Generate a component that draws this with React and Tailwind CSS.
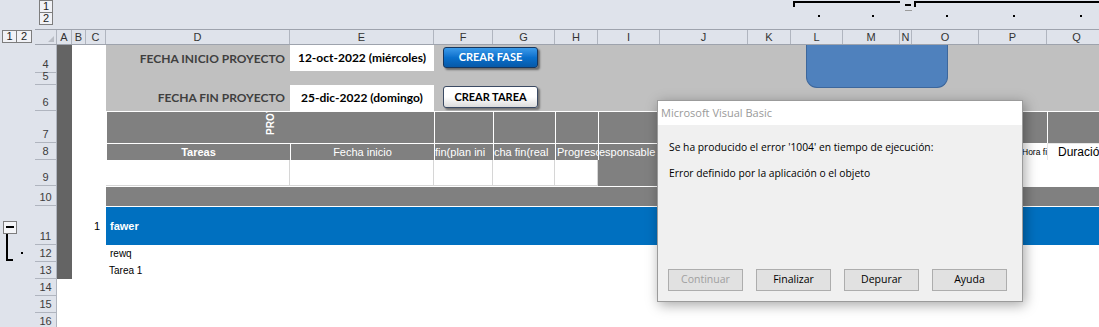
import React from 'react';

// column widths (Excel columns A..Q)
const W = {
  A: 'w-[15px]', B: 'w-[14px]', C: 'w-[20px]', D: 'w-[184px]', E: 'w-[144px]', F: 'w-[59px]', G: 'w-[62px]',
  H: 'w-[43px]', I: 'w-[62px]', J: 'w-[88px]', K: 'w-[43px]', L: 'w-[52px]', M: 'w-[57px]', N: 'w-[12px]',
  O: 'w-[67px]', P: 'w-[68px]', Q: 'w-[60px]',
};
const COLS = ['A', 'B', 'C', 'D', 'E', 'F', 'G', 'H', 'I', 'J', 'K', 'L', 'M', 'N', 'O', 'P', 'Q'];

const LevelBtn = ({ children, className = '' }) => (
  <div className={`flex h-[13px] w-[14px] shrink-0 items-center justify-center border border-[#7d7d7d] bg-[#f1f2f6] text-[11px] leading-none text-[#222] ${className}`}>
    {children}
  </div>
);

const Row = ({ n, h, outline, children }) => (
  <div className={`flex shrink-0 ${h}`}>
    <div className="relative w-[35px] shrink-0 bg-[#dfe3eb]">{outline}</div>
    <div className="flex w-[22px] shrink-0 items-end justify-center border-r border-b border-[#b0b5bf] bg-[#dfe3eb] pb-[1px] text-[11px] leading-[13px] text-[#3c3c3c]">
      {n}
    </div>
    <div className="flex min-w-0 flex-1">{children}</div>
  </div>
);

const Dark = () => <div className={`${W.A} shrink-0 bg-[#646464]`} />;
const WhiteBC = ({ children }) => <div className="w-[34px] shrink-0 bg-white">{children}</div>;

const hdr = 'flex shrink-0 items-center overflow-hidden whitespace-nowrap border-t border-l border-white bg-[#808080] text-[11px] text-white';

const DlgBtn = ({ children, disabled }) => (
  <div className={`flex h-[22px] w-[75px] shrink-0 items-center justify-center border border-[#adadad] bg-[#e1e1e1] text-[10.5px] ${disabled ? 'text-[#a0a0a0]' : 'text-black'}`}>
    {children}
  </div>
);

export default function App() {
  return (
    <div className="relative h-[327px] w-[1099px] overflow-hidden bg-white font-['Liberation_Sans',Arial,sans-serif]">
      {/* outline bar for columns */}
      <div className="flex h-[29px] bg-[#dfe3eb]">
        <div className="w-[35px] shrink-0" />
        <div className="flex w-[22px] shrink-0 flex-col pl-[4px]">
          <LevelBtn>1</LevelBtn>
          <LevelBtn className="-mt-px">2</LevelBtn>
        </div>
        <div className="w-[736px] shrink-0" />
        <svg width="306" height="29" className="shrink-0">
          <rect x="0" y="1" width="107" height="2" fill="#000" />
          <rect x="0" y="1" width="2" height="6" fill="#000" />
          <rect x="112" y="4" width="6" height="2" fill="#000" />
          <rect x="112" y="10" width="7" height="1" fill="#9a9a9a" />
          <rect x="121" y="1" width="185" height="2" fill="#000" />
          <rect x="121" y="1" width="2" height="6" fill="#000" />
          {[25, 79, 153, 220, 287].map((x) => (
            <rect key={x} x={x} y="15" width="2" height="2" fill="#000" />
          ))}
        </svg>
      </div>

      {/* column headers */}
      <div className="flex h-[16px] bg-[#dfe3eb]">
        <div className="flex w-[35px] shrink-0 pl-[2px] pt-[1px]">
          <LevelBtn className="w-[15px]">1</LevelBtn>
          <LevelBtn className="-ml-px w-[16px]">2</LevelBtn>
        </div>
        <div className="flex flex-1 border-t border-b border-[#9ea3ad]">
          <div className="flex w-[22px] shrink-0 items-end justify-end border-r border-[#b0b5bf] pr-[2px] pb-[2px]">
            <svg width="6" height="6"><polygon points="6,0 6,6 0,6" fill="#b9bdc5" /></svg>
          </div>
          {COLS.map((c) => (
            <div key={c} className={`${W[c]} flex shrink-0 items-center justify-center border-r border-[#b0b5bf] text-[11px] text-[#333]`}>
              {c}
            </div>
          ))}
        </div>
      </div>

      {/* sheet */}
      <Row n="4" h="h-[28px]">
        <Dark />
        <WhiteBC />
        <div className={`${W.D} flex shrink-0 items-center justify-end bg-[#c0c0c0] pr-[5px] font-['Lato',sans-serif] text-[12px] font-bold text-[#3f3f3f]`}>
          FECHA INICIO PROYECTO
        </div>
        <div className={`${W.E} shrink-0 bg-[#c0c0c0] pb-[2px]`}>
          <div className="flex h-full items-center justify-center bg-white font-['Lato',sans-serif] text-[12px] font-bold text-black">
            12-oct-2022 (miércoles)
          </div>
        </div>
        <div className="w-[121px] shrink-0 bg-[#c0c0c0] pt-[2px] pl-[9px]">
          <div className="flex h-[21px] w-[95px] items-center justify-center rounded-[3px] border border-[#17365d] bg-gradient-to-b from-[#3a9bea] via-[#0a70cc] to-[#0759a8] font-['Lato',sans-serif] text-[11px] font-bold text-white shadow-[2px_2px_2px_rgba(0,0,0,0.45)]">
            CREAR FASE
          </div>
        </div>
        <div className="flex-1 bg-[#c0c0c0]" />
      </Row>

      <Row n="5" h="h-[12px]">
        <Dark />
        <WhiteBC />
        <div className="flex-1 bg-[#c0c0c0]" />
      </Row>

      <Row n="6" h="h-[26px]">
        <Dark />
        <WhiteBC />
        <div className={`${W.D} flex shrink-0 items-center justify-end bg-[#c0c0c0] pr-[5px] font-['Lato',sans-serif] text-[12px] font-bold text-[#3f3f3f]`}>
          FECHA FIN PROYECTO
        </div>
        <div className={`${W.E} flex shrink-0 items-center justify-center bg-white font-['Lato',sans-serif] text-[12px] font-bold text-black`}>
          25-dic-2022 (domingo)
        </div>
        <div className="w-[121px] shrink-0 bg-[#c0c0c0] pt-[1px] pl-[9px]">
          <div className="flex h-[22px] w-[95px] items-center justify-center rounded-[3px] border border-[#3b4a63] bg-gradient-to-b from-white via-white to-[#dcdcdc] font-['Lato',sans-serif] text-[11px] font-bold text-black shadow-[2px_2px_2px_rgba(0,0,0,0.4)]">
            CREAR TAREA
          </div>
        </div>
        <div className="flex-1 bg-[#c0c0c0]" />
      </Row>

      <Row n="7" h="h-[32px]">
        <Dark />
        <WhiteBC />
        <div className={`${hdr} w-[328px] items-end justify-center pb-[8px]`}>
          <span className="rotate-180 text-[10px] font-bold leading-[10px] [writing-mode:vertical-rl]">PROYECTO</span>
        </div>
        <div className={`${hdr} ${W.F}`} />
        <div className={`${hdr} ${W.G}`} />
        <div className={`${hdr} ${W.H}`} />
        <div className={`${hdr} ${W.I}`} />
        <div className={`${hdr} ${W.J}`} />
        <div className={`${hdr} ${W.K}`} />
        <div className={`${hdr} w-[109px]`} />
        <div className={`${hdr} w-[79px]`} />
        <div className={`${hdr} ${W.P}`} />
        <div className={`${hdr} flex-1`} />
      </Row>

      <Row n="8" h="h-[17px]">
        <Dark />
        <WhiteBC />
        <div className={`${hdr} ${W.D} justify-center font-bold`}>Tareas</div>
        <div className={`${hdr} ${W.E} justify-center`}>Fecha inicio</div>
        <div className={`${hdr} ${W.F}`}>fin(plan ini</div>
        <div className={`${hdr} ${W.G}`}>cha fin(real</div>
        <div className={`${hdr} ${W.H} pl-[1px]`}>Progreso</div>
        <div className={`${hdr} ${W.I}`}>esponsable</div>
        <div className={`${hdr} w-[319px]`} />
        <div className={`${W.P} flex shrink-0 items-center overflow-hidden whitespace-nowrap border-t border-white bg-white pl-[43px] text-[8.5px] text-black`}>
          Hora fin
        </div>
        <div className="flex flex-1 items-center overflow-hidden whitespace-nowrap border-t border-l border-[#e6e6e6] bg-white pl-[10px] text-[12px] text-black">
          Duración
        </div>
      </Row>

      <Row n="9" h="h-[26px]">
        <Dark />
        <WhiteBC />
        <div className={`${W.D} shrink-0 border-r border-b border-[#d6d6d6] bg-white`} />
        <div className={`${W.E} shrink-0 border-r border-b border-[#d6d6d6] bg-white`} />
        <div className={`${W.F} shrink-0 border-r border-b border-[#d6d6d6] bg-white`} />
        <div className={`${W.G} shrink-0 border-r border-b border-[#d6d6d6] bg-white`} />
        <div className={`${W.H} shrink-0 border-r border-b border-[#d6d6d6] bg-white`} />
        <div className="w-[381px] shrink-0 bg-[#808080]" />
        <div className="flex-1 bg-white" />
      </Row>

      <Row n="10" h="h-[20px]">
        <Dark />
        <WhiteBC />
        <div className="flex-1 border-t border-white bg-[#808080]" />
      </Row>

      <Row
        n="11"
        h="h-[39px]"
        outline={
          <svg width="35" height="56" className="absolute top-0 left-0 z-10 overflow-visible">
            <rect x="3.5" y="15.5" width="13" height="12" fill="#f4f5f8" stroke="#7d7d7d" />
            <rect x="6" y="20" width="8" height="2" fill="#000" />
            <rect x="6" y="28" width="2" height="27" fill="#000" />
            <rect x="6" y="53" width="7" height="2" fill="#000" />
            <rect x="21" y="46" width="2" height="2" fill="#000" />
          </svg>
        }
      >
        <Dark />
        <div className={`${W.B} shrink-0 bg-white`} />
        <div className={`${W.C} flex shrink-0 items-center justify-end bg-white pr-[6px] pt-[2px] text-[11px] text-black`}>1</div>
        <div className="flex flex-1 items-center border-t border-white bg-[#0070c0] pl-[4px] pt-[1px] text-[11px] font-bold text-white">
          fawer
        </div>
      </Row>

      <Row n="12" h="h-[17px]">
        <Dark />
        <WhiteBC />
        <div className="flex flex-1 items-center bg-white pl-[4px] text-[10px] text-black">rewq</div>
      </Row>

      <Row n="13" h="h-[17px]">
        <Dark />
        <WhiteBC />
        <div className="flex flex-1 items-center bg-white pl-[3px] text-[10px] text-black">Tarea 1</div>
      </Row>

      <Row n="14" h="h-[17px]" />
      <Row n="15" h="h-[17px]" />
      <Row n="16" h="h-[17px]" />

      {/* rounded shape drawn over L4:O5 */}
      <div className="absolute top-[45px] left-[806px] h-[43px] w-[142px] rounded-b-[11px] border border-t-0 border-[#3d679c] bg-[#4f81bd]" />

      {/* VBA error dialog */}
      <div className="absolute top-[100px] left-[657px] z-20 flex h-[202px] w-[366px] flex-col border border-[#9b9b9b] bg-[#f0f0f0] font-['Open_Sans',sans-serif] shadow-[2px_3px_12px_rgba(0,0,0,0.35)]">
        <div className="flex h-[24px] shrink-0 items-center bg-white pl-[3px] text-[11px] text-[#9a9a9a]">
          Microsoft Visual Basic
        </div>
        <div className="flex-1 pt-[15px] pl-[11px] text-[10.3px] leading-[14px] text-black">
          <p>Se ha producido el error '1004' en tiempo de ejecución:</p>
          <p className="mt-[12px]">Error definido por la aplicación o el objeto</p>
        </div>
        <div className="flex gap-[13px] pb-[10px] pl-[10px]">
          <DlgBtn disabled>Continuar</DlgBtn>
          <DlgBtn>Finalizar</DlgBtn>
          <DlgBtn>Depurar</DlgBtn>
          <DlgBtn>Ayuda</DlgBtn>
        </div>
      </div>
    </div>
  );
}
